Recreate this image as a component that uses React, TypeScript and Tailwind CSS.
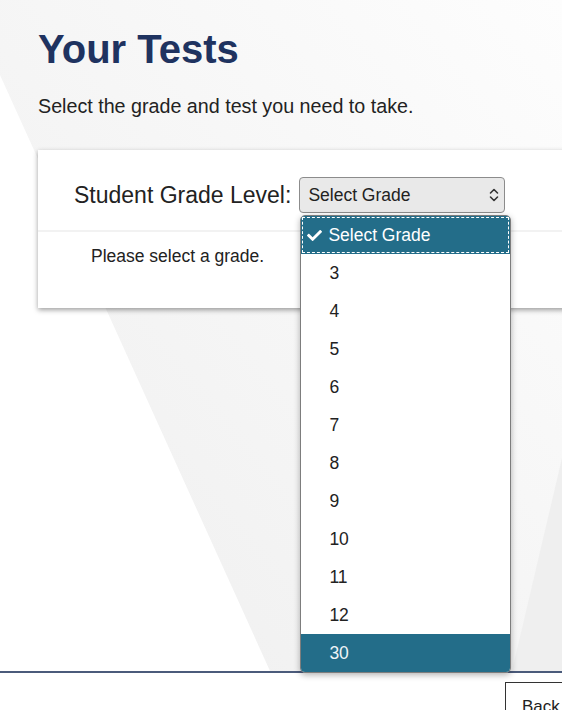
import { FaCheck } from "react-icons/fa"

const grades = ["3", "4", "5", "6", "7", "8", "9", "10", "11", "12", "30"]

function UpDownIcon() {
  return (
    <svg width="12" height="18" viewBox="0 0 12 18" fill="none" stroke="#333" strokeWidth="1.6" strokeLinecap="round" strokeLinejoin="round">
      <path d="M2.5 7 L6 3.5 L9.5 7" />
      <path d="M2.5 11 L6 14.5 L9.5 11" />
    </svg>
  )
}

function Backdrop() {
  // decorative wedges behind the page
  return (
    <svg className="absolute inset-x-0 top-0 h-[671px] w-full" viewBox="0 0 562 671" preserveAspectRatio="none">
      <defs>
        <linearGradient id="bg" x1="0" y1="1" x2="1" y2="0">
          <stop offset="0" stopColor="#eeeeee" />
          <stop offset="1" stopColor="#fdfdfd" />
        </linearGradient>
      </defs>
      <rect width="562" height="671" fill="url(#bg)" />
      <polygon points="0,75 270,671 0,671" fill="#ffffff" />
      <polygon points="562,458 562,671 512,671" fill="#efefef" />
    </svg>
  )
}

function GradeDropdown() {
  return (
    <div className="absolute left-[1px] top-[38px] z-10 w-[211px] overflow-hidden rounded-[5px] border border-[#7d7d7d] bg-white shadow-[0_2px_6px_rgba(0,0,0,0.3)]">
      <div className="flex h-[38px] items-center gap-[6px] bg-[#236d89] pl-[6px] text-[17.5px] text-white outline-1 -outline-offset-2 outline-dashed outline-white">
        <FaCheck className="h-[15px] w-[15px]" />
        <span>Select Grade</span>
      </div>
      {grades.map((g) => (
        <div
          key={g}
          className={
            g === "30"
              ? "flex h-[38px] items-center bg-[#236d89] pl-[28px] text-[17.5px] text-[#eef4f7]"
              : "flex h-[38px] items-center pl-[28px] text-[17.5px] text-[#222]"
          }
        >
          {g}
        </div>
      ))}
    </div>
  )
}

export default function App() {
  return (
    <div className="relative h-[710px] overflow-hidden bg-white font-['Liberation_Sans',Arial,sans-serif]">
      <Backdrop />
      <main className="relative h-[671px] pt-[30px] pl-[38px]">
        <h1 className="text-[40px] font-bold leading-[39px] text-[#1f3360]">Your Tests</h1>
        <p className="mt-[25px] text-[19.7px] leading-[24px] text-[#222]">Select the grade and test you need to take.</p>

        <div className="mt-[32px] w-[560px] bg-white shadow-[0_2px_5px_rgba(0,0,0,0.38)]">
          <div className="flex items-center border-b-2 border-[#f2f2f2] pt-[27px] pb-[17px] pl-[36px]">
            <label className="text-[23px] leading-[26px] text-[#222]">Student Grade Level:</label>
            <div className="relative ml-[8px]">
              <div className="flex h-[36px] w-[206px] items-center justify-between rounded-[4px] border border-[#8c8c8c] bg-[#e9e9e9] pr-[4px] pl-[8px] text-[17.5px] text-[#222]">
                <span>Select Grade</span>
                <UpDownIcon />
              </div>
              <GradeDropdown />
            </div>
          </div>
          <div className="pt-[14px] pb-[42px] pl-[53px]">
            <p className="text-[17.5px] leading-[20px] text-[#222]">Please select a grade.</p>
          </div>
        </div>
      </main>

      <footer className="relative h-[39px] border-t-2 border-[#4b5b7b] bg-white">
        <button className="absolute top-[9px] left-[505px] flex h-[50px] w-[80px] items-start border border-[#333] bg-white pt-[14px] pl-[16px] text-[17px] leading-[20px] text-[#222]">
          Back
        </button>
      </footer>
    </div>
  )
}
